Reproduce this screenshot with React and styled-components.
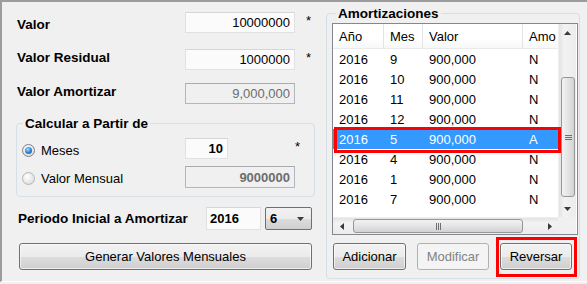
import React from 'react';
import styled, { createGlobalStyle } from 'styled-components';

const GlobalStyle = createGlobalStyle`
  html, body {
    margin: 0;
    padding: 0;
    background: #f0f0f0;
  }
  body {
    font-family: "Liberation Sans", Arial, sans-serif;
    font-size: 13px;
    color: #000;
  }
  * { box-sizing: border-box; }
`;

const Frame = styled.div`
  display: flex;
  width: 587px;
  height: 282px;
  border-top: 2px solid #9c9c9c;
  border-left: 2px solid #9c9c9c;
  border-bottom: 1px solid #fdfdfd;
  overflow: hidden;
`;

const LeftPanel = styled.div`
  flex: none;
  width: 324px;
  padding: 10px 0 0 15px;
`;

const FormRow = styled.div`
  display: grid;
  grid-template-columns: ${p => p.$labelWidth || 168}px 110px auto;
  align-items: center;
  height: ${p => p.$h || 21}px;
  margin-bottom: ${p => p.$mb || 0}px;
`;

const Label = styled.span`
  font-weight: bold;
  font-size: 13.5px;
  line-height: 15px;
  white-space: nowrap;
  transform: translateY(${p => p.$dy || 0}px);
`;

const Field = styled.div`
  height: 100%;
  width: ${p => p.$w || 110}px;
  border: 1px solid ${p => (p.$disabled ? '#b4b7ba' : '#dfe1e5')};
  border-top-color: ${p => (p.$disabled ? '#a9acaf' : '#d4d6da')};
  background: ${p => (p.$disabled ? '#f0f0f0' : '#fbfbfb')};
  color: ${p => (p.$disabled ? '#6d6d6d' : '#000')};
  font-weight: ${p => (p.$bold ? 'bold' : 'normal')};
  padding: 0 4px 0 3px;
  display: flex;
  align-items: center;
  justify-content: ${p => (p.$left ? 'flex-start' : 'flex-end')};
  font-size: 13px;
`;

const Star = styled.span`
  padding-left: ${p => p.$pad || 11}px;
  font-size: 13px;
  line-height: 15px;
  transform: translateY(-2px);
`;

const Group = styled.fieldset`
  margin: 12px 0 0 -1px;
  width: 299px;
  border: 1px solid #d5dfe5;
  border-radius: 4px;
  padding: 7px 0 8px 5px;
`;

const Legend = styled.legend`
  font-weight: bold;
  font-size: 13.5px;
  line-height: 15px;
  padding: 0 2px;
  margin-left: ${p => p.$ml || 1}px;
`;

const RadioRow = styled.div`
  display: grid;
  grid-template-columns: 163px 110px auto;
  align-items: center;
  height: ${p => p.$h || 21}px;
  margin-bottom: ${p => p.$mb || 0}px;
`;

const RadioLabel = styled.label`
  display: flex;
  align-items: center;
  gap: 6px;
  font-size: 13px;
  transform: translateY(${p => p.$dy || 0}px);
`;

const RadioCircle = styled.span`
  width: 13px;
  height: 13px;
  border-radius: 50%;
  border: 1px solid ${p => (p.$checked ? '#7d8287' : '#b3b6b9')};
  background: radial-gradient(circle at 40% 35%, #ffffff 0%, #e6e6e6 60%, #d0d0d0 100%);
  display: flex;
  align-items: center;
  justify-content: center;
  &::after {
    content: '';
    display: ${p => (p.$checked ? 'block' : 'none')};
    width: 7px;
    height: 7px;
    border-radius: 50%;
    background: radial-gradient(circle at 40% 35%, #a9ddff 0%, #2f86d4 50%, #0e4a8a 100%);
  }
`;

const PeriodRow = styled.div`
  display: grid;
  grid-template-columns: 184px 55px 47px;
  column-gap: 4px;
  align-items: center;
  height: 23px;
  margin-top: 10px;
  padding-left: 1px;
`;

const SelectBox = styled.div`
  height: 100%;
  border: 1px solid #707070;
  border-radius: 2px;
  background: linear-gradient(#f2f2f2 0%, #ebebeb 50%, #dddddd 50%, #cfcfcf 100%);
  display: flex;
  align-items: center;
  justify-content: space-between;
  padding: 0 7px 0 4px;
  font-weight: bold;
`;

const Button = styled.button`
  width: ${p => p.$w || 73}px;
  height: 27px;
  margin: ${p => p.$m || 0};
  border: 1px solid ${p => (p.disabled ? '#adb2b5' : '#707070')};
  border-radius: 3px;
  background: ${p =>
    p.disabled
      ? '#f4f4f4'
      : 'linear-gradient(#f2f2f2 0%, #ebebeb 50%, #dddddd 50%, #cfcfcf 100%)'};
  color: ${p => (p.disabled ? '#838383' : '#000')};
  font-family: "Liberation Sans", Arial, sans-serif;
  font-size: 13px;
  padding: 0;
  display: block;
  box-shadow: ${p => (p.disabled ? 'none' : 'inset 0 0 0 1px rgba(255,255,255,0.6)')};
`;

const RightGroup = styled.fieldset`
  margin: 4px 0 0 0;
  width: 254px;
  height: 273px;
  border: 1px solid #d5dfe5;
  border-radius: 4px;
  padding: 2px 1px 8px 5px;
`;

const Table = styled.div`
  position: relative;
  width: 246px;
  height: 212px;
  border: 1px solid #828790;
  background: #fff;
  display: grid;
  grid-template-columns: 225px 18px;
  grid-template-rows: 193px 17px;
`;

const View = styled.div`
  overflow: hidden;
  background: #fff;
`;

const cols = '51px 39px 100px 35px';

const HeaderRow = styled.div`
  display: grid;
  grid-template-columns: ${cols};
  height: 25px;
  background: linear-gradient(#ffffff 0%, #ffffff 60%, #f7f8f9 100%);
  border-bottom: 1px solid #eaeaea;
`;

const HeaderCell = styled.div`
  display: flex;
  align-items: center;
  padding-left: 6px;
  border-right: 1px solid ${p => (p.$last ? 'transparent' : '#e3e4e6')};
  white-space: nowrap;
`;

const Row = styled.div`
  display: grid;
  grid-template-columns: ${cols};
  height: 20px;
  background: ${p => (p.$selected ? '#3399ff' : '#fff')};
  color: ${p => (p.$selected ? '#fff' : '#000')};
`;

const Cell = styled.div`
  display: flex;
  align-items: center;
  padding-left: 6px;
  white-space: nowrap;
`;

const VScroll = styled.div`
  display: flex;
  flex-direction: column;
  background: linear-gradient(90deg, #e3e3e3 0%, #f2f2f2 30%, #ececec 100%);
  border-left: 1px solid #eeeeee;
`;

const HScroll = styled.div`
  display: flex;
  background: linear-gradient(#e3e3e3 0%, #f2f2f2 30%, #ececec 100%);
  border-top: 1px solid #eeeeee;
`;

const Corner = styled.div`
  background: #f0f0f0;
`;

const Arrow = styled.div`
  flex: none;
  width: ${p => (p.$horiz ? '17px' : '100%')};
  height: ${p => (p.$horiz ? '100%' : '17px')};
  display: flex;
  align-items: center;
  justify-content: center;
`;

const Track = styled.div`
  flex: 1;
  display: flex;
  flex-direction: ${p => (p.$horiz ? 'row' : 'column')};
`;

const Thumb = styled.div`
  flex: none;
  margin: ${p => (p.$horiz ? '1px 0 1px 3px' : '36px 1px 0 2px')};
  width: ${p => (p.$horiz ? '170px' : 'auto')};
  height: ${p => (p.$horiz ? 'auto' : '120px')};
  align-self: stretch;
  border: 1px solid #979797;
  border-radius: 3px;
  background: ${p =>
    p.$horiz
      ? 'linear-gradient(#f3f3f3 0%, #e4e4e4 50%, #d2d2d2 100%)'
      : 'linear-gradient(90deg, #f3f3f3 0%, #e4e4e4 50%, #d2d2d2 100%)'};
  display: flex;
  align-items: center;
  justify-content: center;
`;

const Grip = styled.div`
  display: flex;
  flex-direction: ${p => (p.$horiz ? 'row' : 'column')};
  gap: 1px;
  span {
    display: block;
    background: #6f6f6f;
    width: ${p => (p.$horiz ? '1px' : '7px')};
    height: ${p => (p.$horiz ? '7px' : '1px')};
  }
`;

const Annotation = styled.div`
  position: absolute;
  left: 1px;
  top: 103px;
  width: 227px;
  height: 26px;
  border: 3px solid #ff0000;
  pointer-events: none;
`;

const ButtonRow = styled.div`
  display: flex;
  gap: 11px;
  margin: 8px 0 0 1px;
`;

const Highlight = styled.div`
  border: 3px solid #ff0000;
  padding: 3px 2px 4px 1px;
  margin: -6px -5px -7px -4px;
`;

const Tri = ({ dir }) => {
  const pts = {
    up: '0,4 7,4 3.5,0',
    down: '0,0 7,0 3.5,4',
    left: '4,0 4,7 0,3.5',
    right: '0,0 0,7 4,3.5',
  }[dir];
  const horiz = dir === 'left' || dir === 'right';
  return (
    <svg width={horiz ? 4 : 7} height={horiz ? 7 : 4} viewBox={horiz ? '0 0 4 7' : '0 0 7 4'}>
      <polygon points={pts} fill="#3a3a3a" />
    </svg>
  );
};

const rows = [
  { y: '2016', m: '9', v: '900,000', a: 'N' },
  { y: '2016', m: '10', v: '900,000', a: 'N' },
  { y: '2016', m: '11', v: '900,000', a: 'N' },
  { y: '2016', m: '12', v: '900,000', a: 'N' },
  { y: '2016', m: '5', v: '900,000', a: 'A', selected: true },
  { y: '2016', m: '4', v: '900,000', a: 'N' },
  { y: '2016', m: '1', v: '900,000', a: 'N' },
  { y: '2016', m: '7', v: '900,000', a: 'N' },
];

export default function App() {
  return (
    <>
      <GlobalStyle />
      <Frame>
        <LeftPanel>
          <FormRow $mb={16}>
            <Label $dy={2}>Valor</Label>
            <Field>10000000</Field>
            <Star>*</Star>
          </FormRow>
          <FormRow $mb={13}>
            <Label $dy={-2}>Valor Residual</Label>
            <Field>1000000</Field>
            <Star>*</Star>
          </FormRow>
          <FormRow>
            <Label $dy={-2}>Valor Amortizar</Label>
            <Field $disabled>9,000,000</Field>
          </FormRow>

          <Group>
            <Legend>Calcular a Partir de</Legend>
            <RadioRow $mb={7}>
              <RadioLabel $dy={2}>
                <RadioCircle $checked />
                Meses
              </RadioLabel>
              <Field $w={43} $bold>10</Field>
              <Star $pad={-36}>*</Star>
            </RadioRow>
            <RadioRow $h={22}>
              <RadioLabel $dy={1}>
                <RadioCircle />
                Valor Mensual
              </RadioLabel>
              <Field $disabled $bold>9000000</Field>
            </RadioRow>
          </Group>

          <PeriodRow>
            <Label>Periodo Inicial a Amortizar</Label>
            <Field $w={55} $bold $left>2016</Field>
            <SelectBox>
              <span>6</span>
              <Tri dir="down" />
            </SelectBox>
          </PeriodRow>

          <Button $w={293} $m="13px 0 0 2px">Generar Valores Mensuales</Button>
        </LeftPanel>

        <RightGroup>
          <Legend $ml={4}>Amortizaciones</Legend>
          <Table>
            <View>
              <HeaderRow>
                <HeaderCell>Año</HeaderCell>
                <HeaderCell>Mes</HeaderCell>
                <HeaderCell>Valor</HeaderCell>
                <HeaderCell $last>Amo</HeaderCell>
              </HeaderRow>
              {rows.map((r, i) => (
                <Row key={i} $selected={r.selected}>
                  <Cell>{r.y}</Cell>
                  <Cell>{r.m}</Cell>
                  <Cell>{r.v}</Cell>
                  <Cell>{r.a}</Cell>
                </Row>
              ))}
            </View>
            <VScroll>
              <Arrow><Tri dir="up" /></Arrow>
              <Track>
                <Thumb>
                  <Grip><span /><span /><span /></Grip>
                </Thumb>
              </Track>
              <Arrow><Tri dir="down" /></Arrow>
            </VScroll>
            <HScroll>
              <Arrow $horiz><Tri dir="left" /></Arrow>
              <Track $horiz>
                <Thumb $horiz>
                  <Grip $horiz><span /><span /><span /></Grip>
                </Thumb>
              </Track>
              <Arrow $horiz><Tri dir="right" /></Arrow>
            </HScroll>
            <Corner />
            <Annotation />
          </Table>
          <ButtonRow>
            <Button $w={73}>Adicionar</Button>
            <Button $w={72} disabled>Modificar</Button>
            <Highlight>
              <Button $w={72}>Reversar</Button>
            </Highlight>
          </ButtonRow>
        </RightGroup>
      </Frame>
    </>
  );
}
